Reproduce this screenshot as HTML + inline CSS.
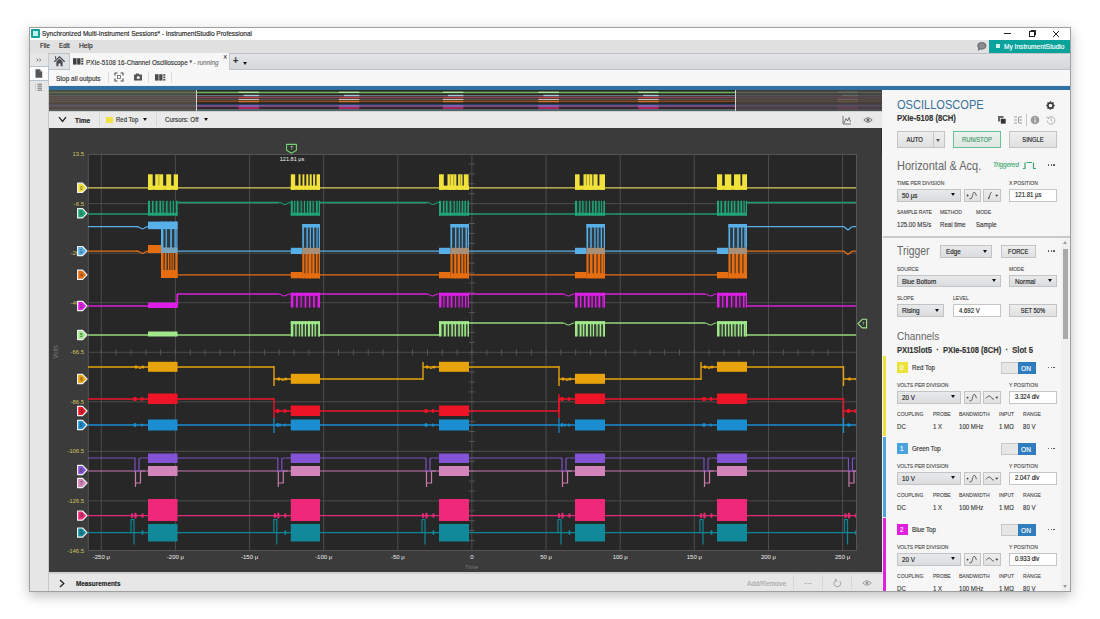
<!DOCTYPE html><html><head><meta charset="utf-8"><style>
*{box-sizing:border-box;margin:0;padding:0}
html,body{width:1100px;height:619px;overflow:hidden;background:#fff;font-family:"Liberation Sans",sans-serif;color:#333}
.a{position:absolute}
.t{position:absolute;white-space:nowrap;line-height:1;-webkit-text-stroke:.15px currentColor}
.lbl{position:absolute;white-space:nowrap;line-height:1;-webkit-text-stroke:.12px currentColor;font-size:5.8px;transform:scaleX(.87);transform-origin:0 50%;color:#4a4a4a}
.val{position:absolute;white-space:nowrap;line-height:1;-webkit-text-stroke:.12px currentColor;font-size:7.0px;transform:scaleX(.87);transform-origin:0 50%;color:#333}
.dd{position:absolute;background:linear-gradient(#e8e9ea,#dadcde);border:1px solid #c2c4c6}
.btn{position:absolute;background:linear-gradient(#eeeeef,#dfe0e1);border:1px solid #c2c4c6}
.tb{position:absolute;background:#fff;border:1px solid #c6c6c6}
.tri{position:absolute;width:0;height:0;border-left:2.5px solid transparent;border-right:2.5px solid transparent;border-top:3.5px solid #111}
</style></head><body><div class="a" style="left:29px;top:27px;width:1042px;height:565px;border:1px solid #a0a0a0;background:#f0f0f0;box-shadow:0 4px 12px rgba(0,0,0,.25)"></div>
<div class="a" style="left:30px;top:28px;width:1040px;height:12px;background:#ffffff;"></div>
<div class="a" style="left:31px;top:29px;width:9px;height:9px;background:#12a39a;border-radius:1px"></div>
<div class="a" style="left:33px;top:31px;width:5px;height:5px;background:#bff0ec"></div>
<div class="t" style="left:42px;top:30.48px;font-size:7.44px;transform:scaleX(0.8696);transform-origin:0 50%;color:#222;font-weight:normal;">Synchronized Multi-Instrument Sessions* - InstrumentStudio Professional</div>
<div class="a" style="left:1004px;top:33px;width:7px;height:1px;background:#222;"></div>
<svg class="a" style="left:1028px;top:29px" width="9" height="9" viewBox="0 0 9 9"><rect x="1.5" y="2.5" width="5" height="5" fill="none" stroke="#222" stroke-width="1"/><path d="M3 2.5V1.5H7.5V6H6.5" fill="none" stroke="#222" stroke-width="1"/></svg>
<svg class="a" style="left:1052px;top:30px" width="8" height="8" viewBox="0 0 8 8"><path d="M1 1L7 7M7 1L1 7" stroke="#222" stroke-width="1"/></svg>
<div class="a" style="left:30px;top:40px;width:1040px;height:13px;background:#e1e1e1;"></div>
<div class="t" style="left:40.1px;top:42.37px;font-size:7.06px;transform:scaleX(0.8696);transform-origin:0 50%;color:#222;font-weight:normal;">File</div>
<div class="t" style="left:59.2px;top:42.29px;font-size:7.21px;transform:scaleX(0.8696);transform-origin:0 50%;color:#222;font-weight:normal;">Edit</div>
<div class="t" style="left:79.2px;top:42.07px;font-size:7.66px;transform:scaleX(0.8696);transform-origin:0 50%;color:#222;font-weight:normal;">Help</div>
<svg class="a" style="left:976px;top:41px" width="11" height="11" viewBox="0 0 11 11"><ellipse cx="5.8" cy="4.8" rx="4.6" ry="3.9" fill="#6f7375"/><path d="M2.5 7L1.5 10L5 8Z" fill="#6f7375"/><ellipse cx="5.8" cy="4.8" rx="3.2" ry="2.6" fill="#8a8e90"/></svg>
<div class="a" style="left:989px;top:40px;width:81px;height:13px;background:#0aa39c;"></div>
<div class="a" style="left:996px;top:44px;width:4px;height:4px;background:#cfeeee;"></div>
<div class="t" style="left:1004px;top:43.01px;font-size:7.59px;transform:scaleX(0.8696);transform-origin:0 50%;color:#ffffff;font-weight:normal;">My InstrumentStudio</div>
<div class="a" style="left:30px;top:53px;width:18px;height:538px;background:#e6e6e6;"></div>
<div class="a" style="left:48px;top:53px;width:1px;height:538px;background:#c8c8c8;"></div>
<svg class="a" style="left:36px;top:58px" width="6" height="4" viewBox="0 0 6 4"><path d="M0.8 0.6L2.2 2L0.8 3.4M3.4 0.6L4.8 2L3.4 3.4" fill="none" stroke="#666" stroke-width=".9"/></svg>
<div class="a" style="left:30px;top:66px;width:19px;height:14.5px;background:#ffffff;border:1px solid #b4c4d2;border-left:0"></div>
<svg class="a" style="left:35px;top:69px" width="8" height="9" viewBox="0 0 8 9"><path d="M0.5 0.3H4.8L7.2 2.7V8.7H0.5Z" fill="#55585b"/><path d="M4.8 0.3V2.7H7.2" fill="#9a9da0"/></svg>
<svg class="a" style="left:34px;top:83px" width="9" height="8" viewBox="0 0 9 8"><path d="M3.5 1.2H8M3.5 3.2H8M3.5 5.2H8M3.5 7.2H8" stroke="#666" stroke-width=".9"/><path d="M1.5 0.5V7.8" stroke="#bbb" stroke-width=".6"/></svg>
<div class="a" style="left:49px;top:53px;width:1021px;height:17px;background:linear-gradient(#e2e4e7,#d5d8db);border-top:1px solid #bfc2c5;border-bottom:1px solid #c0c3c6"></div>
<div class="a" style="left:49px;top:54px;width:21px;height:15px;background:#dfe2e5;border-right:1px solid #c5c8cb"></div>
<svg class="a" style="left:53px;top:55px" width="13" height="13" viewBox="0 0 13 13"><path d="M1.3 6.8L6.5 1.8L11.7 6.8" fill="none" stroke="#45494d" stroke-width="1.2"/><path d="M2.6 1.2V4.2" stroke="#45494d" stroke-width="1"/><path d="M3.4 6.6L6.5 3.7L9.6 6.6V11.2H7.6V8.6H5.4V11.2H3.4Z" fill="#45494d"/></svg>
<div class="a" style="left:70px;top:53px;width:160px;height:17px;background:#f7f7f7;border-right:1px solid #c8cacc"></div>
<svg class="a" style="left:72.5px;top:58px" width="11" height="7" viewBox="0 0 11 7"><rect x="0" y="0.2" width="3.6" height="6.4" fill="#3d3f41"/><rect x="4.2" y="0.2" width="3.3" height="6.4" fill="#3d3f41"/><rect x="8.3" y="0.2" width="2" height="1.6" fill="#3d3f41"/><rect x="8.3" y="2.6" width="2" height="1.6" fill="#3d3f41"/><rect x="8.3" y="5" width="2" height="1.6" fill="#3d3f41"/></svg>
<div class="t" style="left:86px;top:59.07px;font-size:7.26px;transform:scaleX(0.8696);transform-origin:0 50%;color:#333;font-weight:normal;">PXIe-5108 16-Channel Oscilloscope * <span style="color:#777;font-style:italic">- running</span></div>
<div class="t" style="left:222.5px;top:55.33px;font-size:5.75px;transform:scaleX(0.8696);transform-origin:0 50%;color:#333;font-weight:normal;">&#x2715;</div>
<div class="t" style="left:233px;top:56.03px;font-size:10.35px;transform:scaleX(0.8696);transform-origin:0 50%;color:#333;font-weight:bold;">+</div>
<div class="tri" style="left:243px;top:62px;border-left-width:2px;border-right-width:2px;border-top-width:3px"></div>
<div class="a" style="left:49px;top:70px;width:1021px;height:15px;background:#f7f7f7;"></div>
<div class="t" style="left:55.8px;top:74.97px;font-size:7.45px;transform:scaleX(0.8696);transform-origin:0 50%;color:#333;font-weight:normal;">Stop all outputs</div>
<div class="a" style="left:108px;top:72px;width:1px;height:11px;background:#dcdcdc;"></div>
<svg class="a" style="left:114px;top:72px" width="10" height="10" viewBox="0 0 10 10"><path d="M1 3.5V1H3.5M6.5 1H9V3.5M9 6.5V9H6.5M3.5 9H1V6.5" fill="none" stroke="#555" stroke-width="1.2"/><rect x="3.5" y="3.5" width="3" height="3" fill="none" stroke="#666" stroke-width=".8"/></svg>
<svg class="a" style="left:133px;top:73px" width="10" height="8" viewBox="0 0 10 8"><rect x="1" y="1.5" width="8" height="6" fill="#555"/><rect x="3" y="0.5" width="3" height="1.5" fill="#555"/><circle cx="5.3" cy="4.5" r="1.6" fill="#eee"/></svg>
<div class="a" style="left:148px;top:72px;width:1px;height:11px;background:#dcdcdc;"></div>
<svg class="a" style="left:155px;top:74px" width="11" height="7" viewBox="0 0 11 7"><rect x="0" y="0.2" width="3.6" height="6.4" fill="#4a4c4e"/><rect x="4.2" y="0.2" width="3.3" height="6.4" fill="#4a4c4e"/><rect x="8.3" y="0.2" width="2" height="1.6" fill="#4a4c4e"/><rect x="8.3" y="2.6" width="2" height="1.6" fill="#4a4c4e"/><rect x="8.3" y="5" width="2" height="1.6" fill="#4a4c4e"/></svg>
<div class="a" style="left:171px;top:72px;width:1px;height:11px;background:#dcdcdc;"></div>
<div class="a" style="left:49px;top:85.5px;width:1021px;height:4.5px;background:#3170a2;"></div>
<svg class="a" style="left:49px;top:90px" width="834" height="21" viewBox="49 90 834 21"><rect x="49" y="90" width="834" height="21" fill="#262626"/><rect x="49" y="91.7" width="834" height="1.6" fill="#70b458"/><rect x="49" y="95.15" width="834" height="1.1" fill="#6e8494"/><rect x="49" y="96.75" width="834" height="1.5" fill="#8e4650"/><rect x="49" y="98.75" width="834" height="1.1" fill="#5c5c5c"/><rect x="49" y="100.5" width="834" height="1.6" fill="#8a4a20"/><rect x="49" y="104.0" width="834" height="1.0" fill="#28406a"/><rect x="49" y="105.25" width="834" height="1.5" fill="#8a5a98"/><rect x="49" y="107.4" width="834" height="1.2" fill="#4a2030"/><rect x="49" y="109.25" width="834" height="1.5" fill="#5c7c84"/><g opacity=".75"><rect x="238.6" y="91.6" width="20.5" height="1.4" fill="#c8f0b0"/><rect x="243.6" y="94.8" width="15.5" height="1.4" fill="#c0e8f8"/><rect x="238.6" y="97" width="20.5" height="1.2" fill="#e04850"/><rect x="238.6" y="99" width="20.5" height="1" fill="#e8e8e0"/><rect x="238.6" y="100.8" width="20.5" height="1.5" fill="#e08030"/><rect x="238.6" y="105.2" width="20.5" height="1.5" fill="#9070d0"/><rect x="238.6" y="107.2" width="20.5" height="1.6" fill="#f02a80"/></g><g opacity=".75"><rect x="338.9" y="91.6" width="20.5" height="1.4" fill="#c8f0b0"/><rect x="343.9" y="94.8" width="15.5" height="1.4" fill="#c0e8f8"/><rect x="338.9" y="97" width="20.5" height="1.2" fill="#e04850"/><rect x="338.9" y="99" width="20.5" height="1" fill="#e8e8e0"/><rect x="338.9" y="100.8" width="20.5" height="1.5" fill="#e08030"/><rect x="338.9" y="105.2" width="20.5" height="1.5" fill="#9070d0"/><rect x="338.9" y="107.2" width="20.5" height="1.6" fill="#f02a80"/></g><g opacity=".75"><rect x="442.9" y="91.6" width="20.5" height="1.4" fill="#c8f0b0"/><rect x="447.9" y="94.8" width="15.5" height="1.4" fill="#c0e8f8"/><rect x="442.9" y="97" width="20.5" height="1.2" fill="#e04850"/><rect x="442.9" y="99" width="20.5" height="1" fill="#e8e8e0"/><rect x="442.9" y="100.8" width="20.5" height="1.5" fill="#e08030"/><rect x="442.9" y="105.2" width="20.5" height="1.5" fill="#9070d0"/><rect x="442.9" y="107.2" width="20.5" height="1.6" fill="#f02a80"/></g><g opacity=".75"><rect x="538.4" y="91.6" width="20.5" height="1.4" fill="#c8f0b0"/><rect x="543.4" y="94.8" width="15.5" height="1.4" fill="#c0e8f8"/><rect x="538.4" y="97" width="20.5" height="1.2" fill="#e04850"/><rect x="538.4" y="99" width="20.5" height="1" fill="#e8e8e0"/><rect x="538.4" y="100.8" width="20.5" height="1.5" fill="#e08030"/><rect x="538.4" y="105.2" width="20.5" height="1.5" fill="#9070d0"/><rect x="538.4" y="107.2" width="20.5" height="1.6" fill="#f02a80"/></g><g opacity=".75"><rect x="638.1" y="91.6" width="20.5" height="1.4" fill="#c8f0b0"/><rect x="643.1" y="94.8" width="15.5" height="1.4" fill="#c0e8f8"/><rect x="638.1" y="97" width="20.5" height="1.2" fill="#e04850"/><rect x="638.1" y="99" width="20.5" height="1" fill="#e8e8e0"/><rect x="638.1" y="100.8" width="20.5" height="1.5" fill="#e08030"/><rect x="638.1" y="105.2" width="20.5" height="1.5" fill="#9070d0"/><rect x="638.1" y="107.2" width="20.5" height="1.6" fill="#f02a80"/></g><g opacity=".75"><rect x="837.5" y="91.6" width="20.5" height="1.4" fill="#c8f0b0"/><rect x="842.5" y="94.8" width="15.5" height="1.4" fill="#c0e8f8"/><rect x="837.5" y="97" width="20.5" height="1.2" fill="#e04850"/><rect x="837.5" y="99" width="20.5" height="1" fill="#e8e8e0"/><rect x="837.5" y="100.8" width="20.5" height="1.5" fill="#e08030"/><rect x="837.5" y="105.2" width="20.5" height="1.5" fill="#9070d0"/><rect x="837.5" y="107.2" width="20.5" height="1.6" fill="#f02a80"/></g><rect x="49" y="90" width="147.5" height="21" fill="#5a5850" opacity=".72"/><rect x="735" y="90" width="148" height="21" fill="#4c4848" opacity=".75"/><path d="M196.5 90V111M735.5 90V111" stroke="#d0d0d0" stroke-width="1"/></svg>
<div class="a" style="left:49px;top:111px;width:834px;height:17px;background:#e9e9e9;border-top:1px solid #d0d0d0"></div>
<svg class="a" style="left:58px;top:116px" width="9" height="7" viewBox="0 0 9 7"><path d="M1 1.2 L4.5 5.5 L8 1.2" fill="none" stroke="#222" stroke-width="1.3"/></svg>
<div class="t" style="left:75.3px;top:116.93px;font-size:7.54px;transform:scaleX(0.8696);transform-origin:0 50%;color:#222;font-weight:bold;">Time</div>
<div class="a" style="left:99px;top:113px;width:1px;height:13px;background:#d4d4d4;"></div>
<div class="a" style="left:106px;top:116.5px;width:6.5px;height:6.5px;background:#f0e442;"></div>
<div class="t" style="left:115.7px;top:117.24px;font-size:6.92px;transform:scaleX(0.8696);transform-origin:0 50%;color:#333;font-weight:normal;">Red Top</div>
<div class="tri" style="left:142.5px;top:118px"></div>
<div class="a" style="left:156px;top:113px;width:1px;height:13px;background:#d4d4d4;"></div>
<div class="t" style="left:164.5px;top:117.11px;font-size:7.18px;transform:scaleX(0.8696);transform-origin:0 50%;color:#333;font-weight:normal;">Cursors: Off</div>
<div class="tri" style="left:203.5px;top:118px"></div>
<svg class="a" style="left:842px;top:114.5px" width="10" height="10" viewBox="0 0 10 10"><path d="M1 1V9H9" fill="none" stroke="#666" stroke-width=".9"/><path d="M2 8L4 3.5L5.5 6L7 2.5L8.5 7" fill="none" stroke="#666" stroke-width=".9"/></svg>
<svg class="a" style="left:863px;top:116px" width="10" height="8" viewBox="0 0 10 8"><path d="M0.8 4Q5 -0.5 9.2 4Q5 8.5 0.8 4Z" fill="none" stroke="#666" stroke-width=".9"/><circle cx="5" cy="4" r="1.5" fill="#666"/></svg>
<div class="a" style="left:49px;top:128px;width:833px;height:444px;background:#3b3b3b;"></div>
<div class="a" style="left:880.5px;top:128px;width:1.5px;height:444px;background:#303030;"></div>
<svg class="a" style="left:49px;top:128px" width="834" height="444" viewBox="49 128 834 444" font-family="Liberation Sans, sans-serif"><rect x="88" y="154" width="769" height="397" fill="#272727"/><path d="M101.3 154V551M175.4 154V551M249.6 154V551M323.7 154V551M397.8 154V551M471.9 154V551M546.1 154V551M620.2 154V551M694.3 154V551M768.5 154V551M842.6 154V551M88 203.6H857M88 253.2H857M88 302.7H857M88 352.3H857M88 401.8H857M88 451.3H857M88 500.9H857" stroke="#4c4c4c" stroke-width="1" fill="none"/><path d="M88.3 550.5V154.5H856.5V550.5H88" fill="none" stroke="#555" stroke-width="1"/><path d="M101.3 349.3V355.3M116.1 349.3V355.3M131.0 349.3V355.3M145.8 349.3V355.3M160.6 349.3V355.3M175.4 349.3V355.3M190.3 349.3V355.3M205.1 349.3V355.3M219.9 349.3V355.3M234.7 349.3V355.3M249.6 349.3V355.3M264.4 349.3V355.3M279.2 349.3V355.3M294.0 349.3V355.3M308.9 349.3V355.3M323.7 349.3V355.3M338.5 349.3V355.3M353.3 349.3V355.3M368.2 349.3V355.3M383.0 349.3V355.3M397.8 349.3V355.3M412.6 349.3V355.3M427.5 349.3V355.3M442.3 349.3V355.3M457.1 349.3V355.3M471.9 349.3V355.3M486.8 349.3V355.3M501.6 349.3V355.3M516.4 349.3V355.3M531.3 349.3V355.3M546.1 349.3V355.3M560.9 349.3V355.3M575.7 349.3V355.3M590.6 349.3V355.3M605.4 349.3V355.3M620.2 349.3V355.3M635.0 349.3V355.3M649.9 349.3V355.3M664.7 349.3V355.3M679.5 349.3V355.3M694.3 349.3V355.3M709.2 349.3V355.3M724.0 349.3V355.3M738.8 349.3V355.3M753.6 349.3V355.3M768.5 349.3V355.3M783.3 349.3V355.3M798.1 349.3V355.3M812.9 349.3V355.3M827.8 349.3V355.3M842.6 349.3V355.3M468.9 164.0H474.9M468.9 173.9H474.9M468.9 183.8H474.9M468.9 193.7H474.9M468.9 203.6H474.9M468.9 213.5H474.9M468.9 223.5H474.9M468.9 233.4H474.9M468.9 243.3H474.9M468.9 253.2H474.9M468.9 263.1H474.9M468.9 273.0H474.9M468.9 282.9H474.9M468.9 292.8H474.9M468.9 302.7H474.9M468.9 312.6H474.9M468.9 322.5H474.9M468.9 332.4H474.9M468.9 342.4H474.9M468.9 352.3H474.9M468.9 362.2H474.9M468.9 372.1H474.9M468.9 382.0H474.9M468.9 391.9H474.9M468.9 401.8H474.9M468.9 411.7H474.9M468.9 421.6H474.9M468.9 431.5H474.9M468.9 441.4H474.9M468.9 451.3H474.9M468.9 461.2H474.9M468.9 471.2H474.9M468.9 481.1H474.9M468.9 491.0H474.9M468.9 500.9H474.9M468.9 510.8H474.9M468.9 520.7H474.9M468.9 530.6H474.9M468.9 540.5H474.9" stroke="#555" stroke-width="1" fill="none"/><path d="M88 187.8H857" stroke="#d8cf58" stroke-width="1.3" fill="none"/><rect x="148.00" y="185.60" width="29.50" height="4.20" fill="#f0e23a"/><rect x="148.00" y="174.30" width="4.70" height="15.50" fill="#f0e23a"/><rect x="155.20" y="174.30" width="8.00" height="15.50" fill="#f0e23a"/><rect x="166.20" y="174.30" width="5.00" height="15.50" fill="#f0e23a"/><rect x="173.70" y="174.30" width="4.30" height="15.50" fill="#f0e23a"/><rect x="158.50" y="174.80" width="0.80" height="10.50" fill="#968e31"/><rect x="290.80" y="185.60" width="29.20" height="4.20" fill="#f0e23a"/><rect x="290.80" y="174.30" width="4.40" height="15.50" fill="#f0e23a"/><rect x="298.60" y="174.30" width="1.90" height="15.50" fill="#f0e23a"/><rect x="302.50" y="174.30" width="1.90" height="15.50" fill="#f0e23a"/><rect x="306.30" y="174.30" width="2.00" height="15.50" fill="#f0e23a"/><rect x="309.70" y="174.30" width="2.00" height="15.50" fill="#f0e23a"/><rect x="313.10" y="174.30" width="2.00" height="15.50" fill="#f0e23a"/><rect x="316.50" y="174.30" width="3.50" height="15.50" fill="#f0e23a"/><rect x="439.00" y="185.60" width="30.00" height="4.20" fill="#f0e23a"/><rect x="439.00" y="174.30" width="4.80" height="15.50" fill="#f0e23a"/><rect x="447.50" y="174.30" width="8.90" height="15.50" fill="#f0e23a"/><rect x="458.10" y="174.30" width="4.40" height="15.50" fill="#f0e23a"/><rect x="463.80" y="174.30" width="4.80" height="15.50" fill="#f0e23a"/><rect x="449.90" y="174.80" width="0.80" height="10.50" fill="#968e31"/><rect x="453.40" y="174.80" width="0.80" height="10.50" fill="#968e31"/><rect x="459.90" y="174.80" width="0.80" height="10.50" fill="#968e31"/><rect x="575.00" y="185.60" width="30.00" height="4.20" fill="#f0e23a"/><rect x="575.00" y="174.30" width="4.60" height="15.50" fill="#f0e23a"/><rect x="583.50" y="174.30" width="8.90" height="15.50" fill="#f0e23a"/><rect x="593.40" y="174.30" width="4.20" height="15.50" fill="#f0e23a"/><rect x="599.40" y="174.30" width="5.60" height="15.50" fill="#f0e23a"/><rect x="585.90" y="174.80" width="0.80" height="10.50" fill="#968e31"/><rect x="589.00" y="174.80" width="0.80" height="10.50" fill="#968e31"/><rect x="717.00" y="185.60" width="30.00" height="4.20" fill="#f0e23a"/><rect x="717.00" y="174.30" width="5.20" height="15.50" fill="#f0e23a"/><rect x="724.80" y="174.30" width="6.50" height="15.50" fill="#f0e23a"/><rect x="734.00" y="174.30" width="6.50" height="15.50" fill="#f0e23a"/><rect x="742.20" y="174.30" width="4.80" height="15.50" fill="#f0e23a"/><path d="M88 214H148M148 202.5H290.8M290.8 202.5H439M439 214H575M575 214H717M717 202.5H857" stroke="#1f9a70" stroke-width="1.3" fill="none"/><rect x="148.00" y="200.80" width="29.50" height="14.80" fill="#263a33"/><rect x="148.00" y="212.80" width="29.50" height="2.80" fill="#20a678"/><rect x="148.00" y="200.80" width="2.00" height="14.80" fill="#20a678"/><rect x="151.99" y="200.80" width="1.52" height="14.80" fill="#20a678"/><rect x="155.68" y="200.80" width="1.66" height="14.80" fill="#20a678"/><rect x="159.45" y="200.80" width="1.65" height="14.80" fill="#20a678"/><rect x="162.43" y="200.80" width="1.33" height="14.80" fill="#20a678"/><rect x="166.09" y="200.80" width="1.45" height="14.80" fill="#20a678"/><rect x="169.84" y="200.80" width="1.08" height="14.80" fill="#20a678"/><rect x="172.73" y="200.80" width="1.17" height="14.80" fill="#20a678"/><rect x="175.81" y="200.80" width="1.40" height="14.80" fill="#20a678"/><rect x="176.30" y="200.80" width="1.20" height="14.80" fill="#20a678"/><rect x="278.80" y="201.50" width="12.00" height="3.00" fill="#272727"/><path d="M278.8 202.5C282.3 202.5 282.3 204.5 284.8 204.5S287.3 202.5 290.8 202.5" stroke="#1f9a70" stroke-width="1.2" fill="none"/><rect x="290.80" y="200.80" width="29.20" height="14.80" fill="#263a33"/><rect x="290.80" y="212.80" width="29.20" height="2.80" fill="#20a678"/><rect x="290.80" y="200.80" width="2.00" height="14.80" fill="#20a678"/><rect x="294.11" y="200.80" width="1.15" height="14.80" fill="#20a678"/><rect x="296.87" y="200.80" width="1.64" height="14.80" fill="#20a678"/><rect x="300.66" y="200.80" width="1.11" height="14.80" fill="#20a678"/><rect x="303.95" y="200.80" width="1.10" height="14.80" fill="#20a678"/><rect x="307.02" y="200.80" width="1.09" height="14.80" fill="#20a678"/><rect x="309.41" y="200.80" width="1.61" height="14.80" fill="#20a678"/><rect x="312.55" y="200.80" width="1.15" height="14.80" fill="#20a678"/><rect x="316.08" y="200.80" width="1.61" height="14.80" fill="#20a678"/><rect x="319.31" y="200.80" width="0.69" height="14.80" fill="#20a678"/><rect x="318.80" y="200.80" width="1.20" height="14.80" fill="#20a678"/><rect x="427.00" y="201.50" width="12.00" height="3.00" fill="#272727"/><path d="M427.0 202.5C430.5 202.5 430.5 204.5 433.0 204.5S435.5 202.5 439.0 202.5" stroke="#1f9a70" stroke-width="1.2" fill="none"/><rect x="439.00" y="200.80" width="30.00" height="14.80" fill="#263a33"/><rect x="439.00" y="212.80" width="30.00" height="2.80" fill="#20a678"/><rect x="439.00" y="200.80" width="2.00" height="14.80" fill="#20a678"/><rect x="442.89" y="200.80" width="1.47" height="14.80" fill="#20a678"/><rect x="445.89" y="200.80" width="1.66" height="14.80" fill="#20a678"/><rect x="449.61" y="200.80" width="1.68" height="14.80" fill="#20a678"/><rect x="453.57" y="200.80" width="1.21" height="14.80" fill="#20a678"/><rect x="456.48" y="200.80" width="1.12" height="14.80" fill="#20a678"/><rect x="459.05" y="200.80" width="1.05" height="14.80" fill="#20a678"/><rect x="461.73" y="200.80" width="1.42" height="14.80" fill="#20a678"/><rect x="464.46" y="200.80" width="1.47" height="14.80" fill="#20a678"/><rect x="467.60" y="200.80" width="1.22" height="14.80" fill="#20a678"/><rect x="467.80" y="200.80" width="1.20" height="14.80" fill="#20a678"/><rect x="575.00" y="200.80" width="30.00" height="14.80" fill="#263a33"/><rect x="575.00" y="212.80" width="30.00" height="2.80" fill="#20a678"/><rect x="575.00" y="200.80" width="2.00" height="14.80" fill="#20a678"/><rect x="579.20" y="200.80" width="1.34" height="14.80" fill="#20a678"/><rect x="582.18" y="200.80" width="1.34" height="14.80" fill="#20a678"/><rect x="585.60" y="200.80" width="1.04" height="14.80" fill="#20a678"/><rect x="589.01" y="200.80" width="1.02" height="14.80" fill="#20a678"/><rect x="592.15" y="200.80" width="1.59" height="14.80" fill="#20a678"/><rect x="595.06" y="200.80" width="1.55" height="14.80" fill="#20a678"/><rect x="598.32" y="200.80" width="1.40" height="14.80" fill="#20a678"/><rect x="601.03" y="200.80" width="1.03" height="14.80" fill="#20a678"/><rect x="603.56" y="200.80" width="1.44" height="14.80" fill="#20a678"/><rect x="603.80" y="200.80" width="1.20" height="14.80" fill="#20a678"/><rect x="717.00" y="200.80" width="30.00" height="14.80" fill="#263a33"/><rect x="717.00" y="212.80" width="30.00" height="2.80" fill="#20a678"/><rect x="717.00" y="200.80" width="2.00" height="14.80" fill="#20a678"/><rect x="720.52" y="200.80" width="1.53" height="14.80" fill="#20a678"/><rect x="724.37" y="200.80" width="1.66" height="14.80" fill="#20a678"/><rect x="727.71" y="200.80" width="1.25" height="14.80" fill="#20a678"/><rect x="730.83" y="200.80" width="1.54" height="14.80" fill="#20a678"/><rect x="733.79" y="200.80" width="1.52" height="14.80" fill="#20a678"/><rect x="737.49" y="200.80" width="1.60" height="14.80" fill="#20a678"/><rect x="740.44" y="200.80" width="1.66" height="14.80" fill="#20a678"/><rect x="743.50" y="200.80" width="1.24" height="14.80" fill="#20a678"/><rect x="746.71" y="200.80" width="0.29" height="14.80" fill="#20a678"/><rect x="745.80" y="200.80" width="1.20" height="14.80" fill="#20a678"/><path d="M88 226.6H138M177.5 251.1H717M747 226.6H843" stroke="#58b0e8" stroke-width="1.3" fill="none"/><path d="M136.5 226.6C140.0 226.6 140.0 228.79999999999998 142.5 228.79999999999998S145.0 226.6 148.5 226.6" stroke="#58b0e8" stroke-width="1.2" fill="none"/><path d="M843.0 226.6C846.0 226.6 846.0 229.79999999999998 848.0 229.79999999999998S850.0 226.6 853.0 226.6M852.5 226.6H857" stroke="#58b0e8" stroke-width="1.4" fill="none"/><path d="M88 251.1H138M177.5 274.8H717M747 251.1H843" stroke="#e66e10" stroke-width="1.3" fill="none"/><path d="M136.5 251.1C140.0 251.1 140.0 253.29999999999998 142.5 253.29999999999998S145.0 251.1 148.5 251.1" stroke="#e66e10" stroke-width="1.2" fill="none"/><path d="M843.0 251.1C846.0 251.1 846.0 254.29999999999998 848.0 254.29999999999998S850.0 251.1 853.0 251.1M852.5 251.1H857" stroke="#e66e10" stroke-width="1.4" fill="none"/><rect x="148.00" y="221.60" width="13.00" height="7.60" fill="#58b0e8"/><rect x="148.00" y="245.00" width="13.00" height="8.00" fill="#e66e10"/><rect x="161.00" y="253.00" width="16.50" height="25.00" fill="#493423"/><rect x="161.00" y="270.00" width="16.50" height="8.00" fill="#e66e10"/><rect x="161.00" y="253.00" width="2.50" height="25.00" fill="#e66e10"/><rect x="164.77" y="253.00" width="1.74" height="25.00" fill="#e66e10"/><rect x="167.95" y="253.00" width="1.25" height="25.00" fill="#e66e10"/><rect x="170.45" y="253.00" width="1.14" height="25.00" fill="#e66e10"/><rect x="172.66" y="253.00" width="1.12" height="25.00" fill="#e66e10"/><rect x="175.33" y="253.00" width="1.80" height="25.00" fill="#e66e10"/><rect x="176.30" y="253.00" width="1.20" height="25.00" fill="#e66e10"/><rect x="161.00" y="221.60" width="16.50" height="31.40" fill="#2e3a42"/><rect x="161.00" y="221.60" width="16.50" height="7.50" fill="#58b0e8"/><rect x="161.00" y="221.60" width="2.40" height="31.40" fill="#58b0e8"/><rect x="165.63" y="221.60" width="1.24" height="31.40" fill="#58b0e8"/><rect x="170.25" y="221.60" width="1.63" height="31.40" fill="#58b0e8"/><rect x="174.44" y="221.60" width="1.39" height="31.40" fill="#58b0e8"/><rect x="176.30" y="221.60" width="1.20" height="31.40" fill="#58b0e8"/><rect x="161.00" y="247.50" width="16.50" height="5.50" fill="#77a5be"/><rect x="290.80" y="247.80" width="11.50" height="6.20" fill="#58b0e8"/><rect x="290.80" y="272.00" width="11.50" height="6.30" fill="#e66e10"/><rect x="302.30" y="254.00" width="17.70" height="24.30" fill="#513722"/><rect x="302.30" y="273.30" width="17.70" height="5.00" fill="#e66e10"/><rect x="302.30" y="254.00" width="2.00" height="24.30" fill="#e66e10"/><rect x="305.56" y="254.00" width="2.02" height="24.30" fill="#e66e10"/><rect x="308.53" y="254.00" width="2.86" height="24.30" fill="#e66e10"/><rect x="312.31" y="254.00" width="2.14" height="24.30" fill="#e66e10"/><rect x="316.02" y="254.00" width="1.52" height="24.30" fill="#e66e10"/><rect x="319.03" y="254.00" width="0.97" height="24.30" fill="#e66e10"/><rect x="318.80" y="254.00" width="1.20" height="24.30" fill="#e66e10"/><rect x="302.30" y="224.00" width="17.70" height="23.80" fill="#2e3a42"/><rect x="302.30" y="224.00" width="17.70" height="3.50" fill="#58b0e8"/><rect x="302.30" y="224.00" width="1.60" height="23.80" fill="#58b0e8"/><rect x="306.46" y="224.00" width="1.37" height="23.80" fill="#58b0e8"/><rect x="309.76" y="224.00" width="1.16" height="23.80" fill="#58b0e8"/><rect x="312.90" y="224.00" width="1.41" height="23.80" fill="#58b0e8"/><rect x="316.46" y="224.00" width="1.17" height="23.80" fill="#58b0e8"/><rect x="318.80" y="224.00" width="1.20" height="23.80" fill="#58b0e8"/><rect x="302.30" y="247.80" width="17.70" height="6.20" fill="#a89078"/><rect x="439.00" y="247.80" width="11.50" height="6.20" fill="#58b0e8"/><rect x="439.00" y="272.00" width="11.50" height="6.30" fill="#e66e10"/><rect x="450.50" y="254.00" width="18.50" height="24.30" fill="#513722"/><rect x="450.50" y="273.30" width="18.50" height="5.00" fill="#e66e10"/><rect x="450.50" y="254.00" width="2.00" height="24.30" fill="#e66e10"/><rect x="454.18" y="254.00" width="2.07" height="24.30" fill="#e66e10"/><rect x="457.54" y="254.00" width="2.54" height="24.30" fill="#e66e10"/><rect x="461.37" y="254.00" width="1.79" height="24.30" fill="#e66e10"/><rect x="464.38" y="254.00" width="1.55" height="24.30" fill="#e66e10"/><rect x="467.13" y="254.00" width="1.87" height="24.30" fill="#e66e10"/><rect x="467.80" y="254.00" width="1.20" height="24.30" fill="#e66e10"/><rect x="450.50" y="224.00" width="18.50" height="23.80" fill="#2e3a42"/><rect x="450.50" y="224.00" width="18.50" height="3.50" fill="#58b0e8"/><rect x="450.50" y="224.00" width="1.60" height="23.80" fill="#58b0e8"/><rect x="455.05" y="224.00" width="1.28" height="23.80" fill="#58b0e8"/><rect x="458.73" y="224.00" width="1.10" height="23.80" fill="#58b0e8"/><rect x="461.74" y="224.00" width="1.06" height="23.80" fill="#58b0e8"/><rect x="465.54" y="224.00" width="1.42" height="23.80" fill="#58b0e8"/><rect x="467.80" y="224.00" width="1.20" height="23.80" fill="#58b0e8"/><rect x="450.50" y="247.80" width="18.50" height="6.20" fill="#a89078"/><rect x="575.00" y="247.80" width="11.50" height="6.20" fill="#58b0e8"/><rect x="575.00" y="272.00" width="11.50" height="6.30" fill="#e66e10"/><rect x="586.50" y="254.00" width="18.50" height="24.30" fill="#513722"/><rect x="586.50" y="273.30" width="18.50" height="5.00" fill="#e66e10"/><rect x="586.50" y="254.00" width="2.00" height="24.30" fill="#e66e10"/><rect x="590.02" y="254.00" width="2.48" height="24.30" fill="#e66e10"/><rect x="593.93" y="254.00" width="2.59" height="24.30" fill="#e66e10"/><rect x="597.71" y="254.00" width="2.50" height="24.30" fill="#e66e10"/><rect x="601.34" y="254.00" width="2.13" height="24.30" fill="#e66e10"/><rect x="604.98" y="254.00" width="0.02" height="24.30" fill="#e66e10"/><rect x="603.80" y="254.00" width="1.20" height="24.30" fill="#e66e10"/><rect x="586.50" y="224.00" width="18.50" height="23.80" fill="#2e3a42"/><rect x="586.50" y="224.00" width="18.50" height="3.50" fill="#58b0e8"/><rect x="586.50" y="224.00" width="1.60" height="23.80" fill="#58b0e8"/><rect x="590.25" y="224.00" width="1.47" height="23.80" fill="#58b0e8"/><rect x="594.30" y="224.00" width="1.25" height="23.80" fill="#58b0e8"/><rect x="597.36" y="224.00" width="1.23" height="23.80" fill="#58b0e8"/><rect x="600.69" y="224.00" width="1.30" height="23.80" fill="#58b0e8"/><rect x="604.35" y="224.00" width="0.65" height="23.80" fill="#58b0e8"/><rect x="603.80" y="224.00" width="1.20" height="23.80" fill="#58b0e8"/><rect x="586.50" y="247.80" width="18.50" height="6.20" fill="#a89078"/><rect x="717.00" y="247.80" width="11.50" height="6.20" fill="#58b0e8"/><rect x="717.00" y="272.00" width="11.50" height="6.30" fill="#e66e10"/><rect x="728.50" y="254.00" width="18.50" height="24.30" fill="#513722"/><rect x="728.50" y="273.30" width="18.50" height="5.00" fill="#e66e10"/><rect x="728.50" y="254.00" width="2.00" height="24.30" fill="#e66e10"/><rect x="731.92" y="254.00" width="2.66" height="24.30" fill="#e66e10"/><rect x="735.75" y="254.00" width="2.39" height="24.30" fill="#e66e10"/><rect x="739.64" y="254.00" width="2.71" height="24.30" fill="#e66e10"/><rect x="743.53" y="254.00" width="2.73" height="24.30" fill="#e66e10"/><rect x="745.80" y="254.00" width="1.20" height="24.30" fill="#e66e10"/><rect x="728.50" y="224.00" width="18.50" height="23.80" fill="#2e3a42"/><rect x="728.50" y="224.00" width="18.50" height="3.50" fill="#58b0e8"/><rect x="728.50" y="224.00" width="1.60" height="23.80" fill="#58b0e8"/><rect x="732.94" y="224.00" width="1.31" height="23.80" fill="#58b0e8"/><rect x="737.23" y="224.00" width="1.47" height="23.80" fill="#58b0e8"/><rect x="741.12" y="224.00" width="1.22" height="23.80" fill="#58b0e8"/><rect x="744.34" y="224.00" width="1.40" height="23.80" fill="#58b0e8"/><rect x="745.80" y="224.00" width="1.20" height="23.80" fill="#58b0e8"/><rect x="728.50" y="247.80" width="18.50" height="6.20" fill="#a89078"/><path d="M88 306H177.5V294H717M747 306H857" stroke="#d820dc" stroke-width="1.3" fill="none"/><rect x="148.00" y="302.50" width="29.50" height="5.50" fill="#de1ee6"/><rect x="176.50" y="294.00" width="1.50" height="12.00" fill="#de1ee6"/><rect x="278.80" y="293.00" width="12.00" height="3.00" fill="#272727"/><path d="M278.3 294C281.8 294 281.8 296.0 284.3 296.0S286.8 294 290.3 294" stroke="#d820dc" stroke-width="1.2" fill="none"/><rect x="290.80" y="292.80" width="29.20" height="14.70" fill="#3d263e"/><rect x="290.80" y="292.80" width="29.20" height="3.00" fill="#de1ee6"/><rect x="290.80" y="292.80" width="2.50" height="14.70" fill="#de1ee6"/><rect x="296.07" y="292.80" width="1.72" height="14.70" fill="#de1ee6"/><rect x="300.61" y="292.80" width="1.17" height="14.70" fill="#de1ee6"/><rect x="304.67" y="292.80" width="1.58" height="14.70" fill="#de1ee6"/><rect x="308.99" y="292.80" width="1.42" height="14.70" fill="#de1ee6"/><rect x="313.08" y="292.80" width="1.77" height="14.70" fill="#de1ee6"/><rect x="317.55" y="292.80" width="1.72" height="14.70" fill="#de1ee6"/><rect x="318.80" y="292.80" width="1.20" height="14.70" fill="#de1ee6"/><rect x="427.00" y="293.00" width="12.00" height="3.00" fill="#272727"/><path d="M426.5 294C430.0 294 430.0 296.0 432.5 296.0S435.0 294 438.5 294" stroke="#d820dc" stroke-width="1.2" fill="none"/><rect x="439.00" y="292.80" width="30.00" height="14.70" fill="#3d263e"/><rect x="439.00" y="292.80" width="30.00" height="3.00" fill="#de1ee6"/><rect x="439.00" y="292.80" width="2.50" height="14.70" fill="#de1ee6"/><rect x="443.34" y="292.80" width="1.16" height="14.70" fill="#de1ee6"/><rect x="446.92" y="292.80" width="1.65" height="14.70" fill="#de1ee6"/><rect x="450.67" y="292.80" width="1.69" height="14.70" fill="#de1ee6"/><rect x="455.04" y="292.80" width="1.04" height="14.70" fill="#de1ee6"/><rect x="458.54" y="292.80" width="1.23" height="14.70" fill="#de1ee6"/><rect x="461.65" y="292.80" width="1.13" height="14.70" fill="#de1ee6"/><rect x="465.02" y="292.80" width="1.18" height="14.70" fill="#de1ee6"/><rect x="468.28" y="292.80" width="0.72" height="14.70" fill="#de1ee6"/><rect x="467.80" y="292.80" width="1.20" height="14.70" fill="#de1ee6"/><rect x="563.00" y="293.00" width="12.00" height="3.00" fill="#272727"/><path d="M562.5 294C566.0 294 566.0 296.0 568.5 296.0S571.0 294 574.5 294" stroke="#d820dc" stroke-width="1.2" fill="none"/><rect x="575.00" y="292.80" width="30.00" height="14.70" fill="#3d263e"/><rect x="575.00" y="292.80" width="30.00" height="3.00" fill="#de1ee6"/><rect x="575.00" y="292.80" width="2.50" height="14.70" fill="#de1ee6"/><rect x="579.95" y="292.80" width="1.38" height="14.70" fill="#de1ee6"/><rect x="583.99" y="292.80" width="1.59" height="14.70" fill="#de1ee6"/><rect x="587.71" y="292.80" width="1.90" height="14.70" fill="#de1ee6"/><rect x="591.42" y="292.80" width="1.41" height="14.70" fill="#de1ee6"/><rect x="595.01" y="292.80" width="1.41" height="14.70" fill="#de1ee6"/><rect x="598.38" y="292.80" width="1.83" height="14.70" fill="#de1ee6"/><rect x="602.54" y="292.80" width="1.04" height="14.70" fill="#de1ee6"/><rect x="603.80" y="292.80" width="1.20" height="14.70" fill="#de1ee6"/><rect x="705.00" y="293.00" width="12.00" height="3.00" fill="#272727"/><path d="M704.5 294C708.0 294 708.0 296.0 710.5 296.0S713.0 294 716.5 294" stroke="#d820dc" stroke-width="1.2" fill="none"/><rect x="717.00" y="292.80" width="30.00" height="14.70" fill="#3d263e"/><rect x="717.00" y="292.80" width="30.00" height="3.00" fill="#de1ee6"/><rect x="717.00" y="292.80" width="2.50" height="14.70" fill="#de1ee6"/><rect x="722.06" y="292.80" width="1.34" height="14.70" fill="#de1ee6"/><rect x="726.02" y="292.80" width="1.96" height="14.70" fill="#de1ee6"/><rect x="730.92" y="292.80" width="1.42" height="14.70" fill="#de1ee6"/><rect x="735.28" y="292.80" width="1.64" height="14.70" fill="#de1ee6"/><rect x="739.24" y="292.80" width="1.14" height="14.70" fill="#de1ee6"/><rect x="743.01" y="292.80" width="1.56" height="14.70" fill="#de1ee6"/><rect x="745.80" y="292.80" width="1.20" height="14.70" fill="#de1ee6"/><path d="M88 335H148M148 335H290.8M290.8 335H439M439 323H575M575 323H717M717 335H857" stroke="#92d87c" stroke-width="1.3" fill="none"/><rect x="148.00" y="331.50" width="29.50" height="5.00" fill="#a0e88a"/><rect x="290.80" y="321.20" width="29.20" height="15.30" fill="#394436"/><rect x="290.80" y="321.20" width="29.20" height="3.00" fill="#a0e88a"/><rect x="290.80" y="321.20" width="2.50" height="15.30" fill="#a0e88a"/><rect x="295.27" y="321.20" width="1.35" height="15.30" fill="#a0e88a"/><rect x="298.90" y="321.20" width="1.00" height="15.30" fill="#a0e88a"/><rect x="301.32" y="321.20" width="1.57" height="15.30" fill="#a0e88a"/><rect x="304.87" y="321.20" width="1.14" height="15.30" fill="#a0e88a"/><rect x="308.00" y="321.20" width="1.89" height="15.30" fill="#a0e88a"/><rect x="311.60" y="321.20" width="1.43" height="15.30" fill="#a0e88a"/><rect x="314.58" y="321.20" width="1.29" height="15.30" fill="#a0e88a"/><rect x="318.25" y="321.20" width="1.38" height="15.30" fill="#a0e88a"/><rect x="318.80" y="321.20" width="1.20" height="15.30" fill="#a0e88a"/><rect x="439.00" y="321.20" width="30.00" height="15.30" fill="#394436"/><rect x="439.00" y="321.20" width="30.00" height="3.00" fill="#a0e88a"/><rect x="439.00" y="321.20" width="2.50" height="15.30" fill="#a0e88a"/><rect x="443.86" y="321.20" width="1.91" height="15.30" fill="#a0e88a"/><rect x="447.73" y="321.20" width="1.26" height="15.30" fill="#a0e88a"/><rect x="451.37" y="321.20" width="1.50" height="15.30" fill="#a0e88a"/><rect x="454.62" y="321.20" width="1.32" height="15.30" fill="#a0e88a"/><rect x="458.32" y="321.20" width="1.49" height="15.30" fill="#a0e88a"/><rect x="461.43" y="321.20" width="1.48" height="15.30" fill="#a0e88a"/><rect x="464.34" y="321.20" width="1.62" height="15.30" fill="#a0e88a"/><rect x="467.75" y="321.20" width="1.25" height="15.30" fill="#a0e88a"/><rect x="467.80" y="321.20" width="1.20" height="15.30" fill="#a0e88a"/><rect x="563.00" y="322.00" width="12.00" height="3.00" fill="#272727"/><path d="M562.5 323C566.0 323 566.0 325.0 568.5 325.0S571.0 323 574.5 323" stroke="#92d87c" stroke-width="1.2" fill="none"/><rect x="575.00" y="321.20" width="30.00" height="15.30" fill="#394436"/><rect x="575.00" y="321.20" width="30.00" height="3.00" fill="#a0e88a"/><rect x="575.00" y="321.20" width="2.50" height="15.30" fill="#a0e88a"/><rect x="579.66" y="321.20" width="1.83" height="15.30" fill="#a0e88a"/><rect x="582.80" y="321.20" width="1.53" height="15.30" fill="#a0e88a"/><rect x="585.93" y="321.20" width="1.94" height="15.30" fill="#a0e88a"/><rect x="590.03" y="321.20" width="1.25" height="15.30" fill="#a0e88a"/><rect x="592.87" y="321.20" width="1.15" height="15.30" fill="#a0e88a"/><rect x="596.41" y="321.20" width="1.29" height="15.30" fill="#a0e88a"/><rect x="599.67" y="321.20" width="1.47" height="15.30" fill="#a0e88a"/><rect x="603.16" y="321.20" width="1.60" height="15.30" fill="#a0e88a"/><rect x="603.80" y="321.20" width="1.20" height="15.30" fill="#a0e88a"/><rect x="705.00" y="322.00" width="12.00" height="3.00" fill="#272727"/><path d="M704.5 323C708.0 323 708.0 325.0 710.5 325.0S713.0 323 716.5 323" stroke="#92d87c" stroke-width="1.2" fill="none"/><rect x="717.00" y="321.20" width="30.00" height="15.30" fill="#394436"/><rect x="717.00" y="321.20" width="30.00" height="3.00" fill="#a0e88a"/><rect x="717.00" y="321.20" width="2.50" height="15.30" fill="#a0e88a"/><rect x="721.62" y="321.20" width="1.12" height="15.30" fill="#a0e88a"/><rect x="724.87" y="321.20" width="1.30" height="15.30" fill="#a0e88a"/><rect x="728.06" y="321.20" width="1.34" height="15.30" fill="#a0e88a"/><rect x="731.02" y="321.20" width="1.53" height="15.30" fill="#a0e88a"/><rect x="734.36" y="321.20" width="1.36" height="15.30" fill="#a0e88a"/><rect x="737.84" y="321.20" width="1.59" height="15.30" fill="#a0e88a"/><rect x="740.77" y="321.20" width="1.25" height="15.30" fill="#a0e88a"/><rect x="743.83" y="321.20" width="1.92" height="15.30" fill="#a0e88a"/><rect x="745.80" y="321.20" width="1.20" height="15.30" fill="#a0e88a"/><path d="M88 367H274M274 379H423M423 367H559M559 379H701M701 367H843.5M843.5 379H857" stroke="#e8a20c" stroke-width="1.3" fill="none"/><path d="M274.0 366.0V386.0" stroke="#e8a20c" stroke-width="1.4"/><path d="M423.0 362.0V380.0" stroke="#e8a20c" stroke-width="1.4"/><path d="M559.0 366.0V386.0" stroke="#e8a20c" stroke-width="1.4"/><path d="M701.0 362.0V380.0" stroke="#e8a20c" stroke-width="1.4"/><path d="M843.5 366.0V386.0" stroke="#e8a20c" stroke-width="1.4"/><rect x="148.00" y="361.80" width="29.50" height="10.00" fill="#e8a20c"/><ellipse cx="143.0" cy="367.0" rx="1.3" ry="1.6" fill="#e8a20c"/><ellipse cx="136.0" cy="367.0" rx="1.4" ry="1.8" fill="#e8a20c"/><path d="M138 367Q140 370 142 367" stroke="#e8a20c" stroke-width="1.2" fill="none"/><rect x="290.80" y="373.80" width="29.20" height="10.00" fill="#e8a20c"/><ellipse cx="285.8" cy="379.0" rx="1.3" ry="1.6" fill="#e8a20c"/><ellipse cx="278.8" cy="379.0" rx="1.4" ry="1.8" fill="#e8a20c"/><path d="M280.8 379Q282.8 382 284.8 379" stroke="#e8a20c" stroke-width="1.2" fill="none"/><rect x="439.00" y="361.80" width="30.00" height="10.00" fill="#e8a20c"/><ellipse cx="434.0" cy="367.0" rx="1.3" ry="1.6" fill="#e8a20c"/><ellipse cx="427.0" cy="367.0" rx="1.4" ry="1.8" fill="#e8a20c"/><path d="M429 367Q431 370 433 367" stroke="#e8a20c" stroke-width="1.2" fill="none"/><rect x="575.00" y="373.80" width="30.00" height="10.00" fill="#e8a20c"/><ellipse cx="570.0" cy="379.0" rx="1.3" ry="1.6" fill="#e8a20c"/><ellipse cx="563.0" cy="379.0" rx="1.4" ry="1.8" fill="#e8a20c"/><path d="M565 379Q567 382 569 379" stroke="#e8a20c" stroke-width="1.2" fill="none"/><rect x="717.00" y="361.80" width="30.00" height="10.00" fill="#e8a20c"/><ellipse cx="712.0" cy="367.0" rx="1.3" ry="1.6" fill="#e8a20c"/><ellipse cx="705.0" cy="367.0" rx="1.4" ry="1.8" fill="#e8a20c"/><path d="M707 367Q709 370 711 367" stroke="#e8a20c" stroke-width="1.2" fill="none"/><path d="M88 399H274M274 411H559M559 399H843.5M843.5 411H857" stroke="#ee1428" stroke-width="1.3" fill="none"/><path d="M274.0 398.0V418.0" stroke="#ee1428" stroke-width="1.4"/><path d="M559.0 398.0V418.0" stroke="#ee1428" stroke-width="1.4"/><path d="M843.5 398.0V418.0" stroke="#ee1428" stroke-width="1.4"/><path d="M559.0 394.0V412.0" stroke="#ee1428" stroke-width="1.4"/><rect x="148.00" y="393.50" width="29.50" height="10.50" fill="#ee1428"/><ellipse cx="142.0" cy="399.0" rx="1.6" ry="2.0" fill="#ee1428"/><ellipse cx="135.0" cy="399.0" rx="1.8" ry="2.2" fill="#ee1428"/><rect x="290.80" y="405.50" width="29.20" height="10.50" fill="#ee1428"/><ellipse cx="284.8" cy="411.0" rx="1.6" ry="2.0" fill="#ee1428"/><ellipse cx="277.8" cy="411.0" rx="1.8" ry="2.2" fill="#ee1428"/><rect x="439.00" y="405.50" width="30.00" height="10.50" fill="#ee1428"/><ellipse cx="433.0" cy="411.0" rx="1.6" ry="2.0" fill="#ee1428"/><ellipse cx="426.0" cy="411.0" rx="1.8" ry="2.2" fill="#ee1428"/><rect x="575.00" y="393.50" width="30.00" height="10.50" fill="#ee1428"/><ellipse cx="569.0" cy="399.0" rx="1.6" ry="2.0" fill="#ee1428"/><ellipse cx="562.0" cy="399.0" rx="1.8" ry="2.2" fill="#ee1428"/><rect x="717.00" y="393.50" width="30.00" height="10.50" fill="#ee1428"/><ellipse cx="711.0" cy="399.0" rx="1.6" ry="2.0" fill="#ee1428"/><ellipse cx="704.0" cy="399.0" rx="1.8" ry="2.2" fill="#ee1428"/><path d="M88 425H857" stroke="#1a8ed0" stroke-width="1.3" fill="none"/><rect x="148.00" y="419.50" width="29.50" height="11.00" fill="#1a8ed0"/><ellipse cx="142.0" cy="425.0" rx="1.3" ry="1.6" fill="#1a8ed0"/><ellipse cx="135.0" cy="425.0" rx="1.6" ry="2.0" fill="#1a8ed0"/><rect x="290.80" y="419.50" width="29.20" height="11.00" fill="#1a8ed0"/><ellipse cx="284.8" cy="425.0" rx="1.3" ry="1.6" fill="#1a8ed0"/><ellipse cx="277.8" cy="425.0" rx="1.6" ry="2.0" fill="#1a8ed0"/><rect x="439.00" y="419.50" width="30.00" height="11.00" fill="#1a8ed0"/><ellipse cx="433.0" cy="425.0" rx="1.3" ry="1.6" fill="#1a8ed0"/><ellipse cx="426.0" cy="425.0" rx="1.6" ry="2.0" fill="#1a8ed0"/><rect x="575.00" y="419.50" width="30.00" height="11.00" fill="#1a8ed0"/><ellipse cx="569.0" cy="425.0" rx="1.3" ry="1.6" fill="#1a8ed0"/><ellipse cx="562.0" cy="425.0" rx="1.6" ry="2.0" fill="#1a8ed0"/><rect x="717.00" y="419.50" width="30.00" height="11.00" fill="#1a8ed0"/><ellipse cx="711.0" cy="425.0" rx="1.3" ry="1.6" fill="#1a8ed0"/><ellipse cx="704.0" cy="425.0" rx="1.6" ry="2.0" fill="#1a8ed0"/><path d="M274.0 418.0V433.0" stroke="#1a8ed0" stroke-width="1.2"/><ellipse cx="280.0" cy="425.0" rx="1.2" ry="1.5" fill="#1a8ed0"/><path d="M559.0 418.0V433.0" stroke="#1a8ed0" stroke-width="1.2"/><ellipse cx="565.0" cy="425.0" rx="1.2" ry="1.5" fill="#1a8ed0"/><path d="M843.5 418.0V433.0" stroke="#1a8ed0" stroke-width="1.2"/><ellipse cx="849.5" cy="425.0" rx="1.2" ry="1.5" fill="#1a8ed0"/><path d="M88 458H857" stroke="#7c50c4" stroke-width="1.2" fill="none"/><path d="M88 471H857" stroke="#c87cb0" stroke-width="1.2" fill="none"/><rect x="148.00" y="453.50" width="29.50" height="9.50" fill="#8452d4"/><rect x="148.00" y="466.00" width="29.50" height="10.00" fill="#d384bb"/><rect x="135.50" y="457.00" width="7.00" height="2.50" fill="#272727"/><path d="M135 458V471H139V458.5Q139 458 142 458" stroke="#7c50c4" stroke-width="1.2" fill="none"/><path d="M135.5 471V487M135.5 483H140.5V471H145" stroke="#c87cb0" stroke-width="1.2" fill="none"/><rect x="290.80" y="453.50" width="29.20" height="9.50" fill="#8452d4"/><rect x="290.80" y="466.00" width="29.20" height="10.00" fill="#d384bb"/><rect x="278.30" y="457.00" width="7.00" height="2.50" fill="#272727"/><path d="M277.8 458V471H281.8V458.5Q281.8 458 284.8 458" stroke="#7c50c4" stroke-width="1.2" fill="none"/><path d="M278.3 471V487M278.3 483H283.3V471H287.8" stroke="#c87cb0" stroke-width="1.2" fill="none"/><rect x="439.00" y="453.50" width="30.00" height="9.50" fill="#8452d4"/><rect x="439.00" y="466.00" width="30.00" height="10.00" fill="#d384bb"/><rect x="426.50" y="457.00" width="7.00" height="2.50" fill="#272727"/><path d="M426 458V471H430V458.5Q430 458 433 458" stroke="#7c50c4" stroke-width="1.2" fill="none"/><path d="M426.5 471V487M426.5 483H431.5V471H436" stroke="#c87cb0" stroke-width="1.2" fill="none"/><rect x="575.00" y="453.50" width="30.00" height="9.50" fill="#8452d4"/><rect x="575.00" y="466.00" width="30.00" height="10.00" fill="#d384bb"/><rect x="562.50" y="457.00" width="7.00" height="2.50" fill="#272727"/><path d="M562 458V471H566V458.5Q566 458 569 458" stroke="#7c50c4" stroke-width="1.2" fill="none"/><path d="M562.5 471V487M562.5 483H567.5V471H572" stroke="#c87cb0" stroke-width="1.2" fill="none"/><rect x="717.00" y="453.50" width="30.00" height="9.50" fill="#8452d4"/><rect x="717.00" y="466.00" width="30.00" height="10.00" fill="#d384bb"/><rect x="704.50" y="457.00" width="7.00" height="2.50" fill="#272727"/><path d="M704 458V471H708V458.5Q708 458 711 458" stroke="#7c50c4" stroke-width="1.2" fill="none"/><path d="M704.5 471V487M704.5 483H709.5V471H714" stroke="#c87cb0" stroke-width="1.2" fill="none"/><path d="M88 515.6H857" stroke="#e42a74" stroke-width="1.3" fill="none"/><path d="M88 532.6H857" stroke="#0e8696" stroke-width="1.3" fill="none"/><rect x="148.00" y="499.00" width="29.50" height="22.00" fill="#f0287a"/><rect x="148.00" y="524.00" width="29.50" height="17.50" fill="#10899a"/><ellipse cx="132.0" cy="515.6" rx="1.3" ry="2.6" fill="#e42a74"/><ellipse cx="135.5" cy="515.6" rx="1.3" ry="3.2" fill="#e42a74"/><ellipse cx="142.5" cy="515.6" rx="1.3" ry="2.4" fill="#e42a74"/><path d="M131 532.6V519.6H134V544.6" stroke="#0e8696" stroke-width="1.2" fill="none"/><ellipse cx="142.5" cy="532.6" rx="1.2" ry="2.5" fill="#0e8696"/><rect x="290.80" y="499.00" width="29.20" height="22.00" fill="#f0287a"/><rect x="290.80" y="524.00" width="29.20" height="17.50" fill="#10899a"/><ellipse cx="274.8" cy="515.6" rx="1.3" ry="2.6" fill="#e42a74"/><ellipse cx="278.3" cy="515.6" rx="1.3" ry="3.2" fill="#e42a74"/><ellipse cx="285.3" cy="515.6" rx="1.3" ry="2.4" fill="#e42a74"/><path d="M273.8 532.6V519.6H276.8V544.6" stroke="#0e8696" stroke-width="1.2" fill="none"/><ellipse cx="285.3" cy="532.6" rx="1.2" ry="2.5" fill="#0e8696"/><rect x="439.00" y="499.00" width="30.00" height="22.00" fill="#f0287a"/><rect x="439.00" y="524.00" width="30.00" height="17.50" fill="#10899a"/><ellipse cx="423.0" cy="515.6" rx="1.3" ry="2.6" fill="#e42a74"/><ellipse cx="426.5" cy="515.6" rx="1.3" ry="3.2" fill="#e42a74"/><ellipse cx="433.5" cy="515.6" rx="1.3" ry="2.4" fill="#e42a74"/><path d="M422 532.6V519.6H425V544.6" stroke="#0e8696" stroke-width="1.2" fill="none"/><ellipse cx="433.5" cy="532.6" rx="1.2" ry="2.5" fill="#0e8696"/><rect x="575.00" y="499.00" width="30.00" height="22.00" fill="#f0287a"/><rect x="575.00" y="524.00" width="30.00" height="17.50" fill="#10899a"/><ellipse cx="559.0" cy="515.6" rx="1.3" ry="2.6" fill="#e42a74"/><ellipse cx="562.5" cy="515.6" rx="1.3" ry="3.2" fill="#e42a74"/><ellipse cx="569.5" cy="515.6" rx="1.3" ry="2.4" fill="#e42a74"/><path d="M558 532.6V519.6H561V544.6" stroke="#0e8696" stroke-width="1.2" fill="none"/><ellipse cx="569.5" cy="532.6" rx="1.2" ry="2.5" fill="#0e8696"/><rect x="717.00" y="499.00" width="30.00" height="22.00" fill="#f0287a"/><rect x="717.00" y="524.00" width="30.00" height="17.50" fill="#10899a"/><ellipse cx="701.0" cy="515.6" rx="1.3" ry="2.6" fill="#e42a74"/><ellipse cx="704.5" cy="515.6" rx="1.3" ry="3.2" fill="#e42a74"/><ellipse cx="711.5" cy="515.6" rx="1.3" ry="2.4" fill="#e42a74"/><path d="M700 532.6V519.6H703V544.6" stroke="#0e8696" stroke-width="1.2" fill="none"/><ellipse cx="711.5" cy="532.6" rx="1.2" ry="2.5" fill="#0e8696"/><rect x="849.00" y="457.00" width="7.00" height="2.50" fill="#272727"/><path d="M848.5 458V471H852.5V458.5Q852.5 458 855.5 458" stroke="#7c50c4" stroke-width="1.2" fill="none"/><path d="M849.0 471V487M849.0 483H854.0V471H858.5" stroke="#c87cb0" stroke-width="1.2" fill="none"/><ellipse cx="845.5" cy="515.6" rx="1.3" ry="2.6" fill="#e42a74"/><ellipse cx="849.0" cy="515.6" rx="1.3" ry="3.2" fill="#e42a74"/><ellipse cx="856.0" cy="515.6" rx="1.3" ry="2.4" fill="#e42a74"/><path d="M844.5 532.6V519.6H847.5V544.6" stroke="#0e8696" stroke-width="1.2" fill="none"/><ellipse cx="856.0" cy="532.6" rx="1.2" ry="2.5" fill="#0e8696"/><ellipse cx="856.5" cy="379.0" rx="1.3" ry="1.6" fill="#e8a20c"/><ellipse cx="849.5" cy="379.0" rx="1.4" ry="1.8" fill="#e8a20c"/><ellipse cx="855.5" cy="411.0" rx="1.6" ry="2.0" fill="#ee1428"/><ellipse cx="848.5" cy="411.0" rx="1.8" ry="2.2" fill="#ee1428"/><ellipse cx="848.5" cy="425.0" rx="1.4" ry="1.8" fill="#1a8ed0"/><rect x="857" y="154" width="30" height="397" fill="#3b3b3b"/><path d="M856.5 154V551" stroke="#555" stroke-width="1"/><text x="84.2" y="156.2" text-anchor="end" font-size="6" fill="#cfc560">13.5</text><text x="84.2" y="205.7" text-anchor="end" font-size="6" fill="#cfc560">-6.5</text><text x="84.2" y="255.3" text-anchor="end" font-size="6" fill="#cfc560">-26.5</text><text x="84.2" y="304.8" text-anchor="end" font-size="6" fill="#cfc560">-46.5</text><text x="84.2" y="354.4" text-anchor="end" font-size="6" fill="#cfc560">-66.5</text><text x="84.2" y="403.9" text-anchor="end" font-size="6" fill="#cfc560">-86.5</text><text x="84.2" y="453.4" text-anchor="end" font-size="6" fill="#cfc560">-106.5</text><text x="84.2" y="503.0" text-anchor="end" font-size="6" fill="#cfc560">-126.5</text><text x="84.2" y="552.5" text-anchor="end" font-size="6" fill="#cfc560">-146.5</text><text x="101.3" y="558.8" text-anchor="middle" font-size="6" fill="#eeeeee">-250 &#956;</text><text x="175.4" y="558.8" text-anchor="middle" font-size="6" fill="#eeeeee">-200 &#956;</text><text x="249.6" y="558.8" text-anchor="middle" font-size="6" fill="#eeeeee">-150 &#956;</text><text x="323.7" y="558.8" text-anchor="middle" font-size="6" fill="#eeeeee">-100 &#956;</text><text x="397.8" y="558.8" text-anchor="middle" font-size="6" fill="#eeeeee">-50 &#956;</text><text x="471.9" y="558.8" text-anchor="middle" font-size="6" fill="#eeeeee">0</text><text x="546.1" y="558.8" text-anchor="middle" font-size="6" fill="#eeeeee">50 &#956;</text><text x="620.2" y="558.8" text-anchor="middle" font-size="6" fill="#eeeeee">100 &#956;</text><text x="694.3" y="558.8" text-anchor="middle" font-size="6" fill="#eeeeee">150 &#956;</text><text x="768.5" y="558.8" text-anchor="middle" font-size="6" fill="#eeeeee">200 &#956;</text><text x="842.6" y="558.8" text-anchor="middle" font-size="6" fill="#eeeeee">250 &#956;</text><text x="471.5" y="569" text-anchor="middle" font-size="6" fill="#7a7a7a" font-style="italic">Time</text><text x="0" y="0" font-size="6.3" fill="#7a7a7a" transform="translate(57.8 352) rotate(-90)" text-anchor="middle">Volts</text><path d="M77.6 183.2H82.6L87 187.8L82.6 192.4H77.6Z" fill="#f0e23a" stroke="#f2f2f2" stroke-width="1.2" stroke-linejoin="round"/><text x="81.3" y="189.5" text-anchor="middle" font-size="4.6" fill="#3a3a3a">0</text><path d="M77.6 208.7H82.6L87 213.3L82.6 217.9H77.6Z" fill="#20a678" stroke="#f2f2f2" stroke-width="1.2" stroke-linejoin="round"/><text x="81.3" y="215.0" text-anchor="middle" font-size="4.6" fill="#3a3a3a">1</text><path d="M77.6 246.5H82.6L87 251.1L82.6 255.7H77.6Z" fill="#58b0e8" stroke="#f2f2f2" stroke-width="1.2" stroke-linejoin="round"/><text x="81.3" y="252.8" text-anchor="middle" font-size="4.6" fill="#3a3a3a">1</text><path d="M77.6 270.2H82.6L87 274.8L82.6 279.4H77.6Z" fill="#e66e10" stroke="#f2f2f2" stroke-width="1.2" stroke-linejoin="round"/><text x="81.3" y="276.5" text-anchor="middle" font-size="4.6" fill="#3a3a3a">4</text><path d="M77.6 301.4H82.6L87 306.0L82.6 310.6H77.6Z" fill="#de1ee6" stroke="#f2f2f2" stroke-width="1.2" stroke-linejoin="round"/><text x="81.3" y="307.7" text-anchor="middle" font-size="4.6" fill="#3a3a3a">2</text><path d="M77.6 330.4H82.6L87 335.0L82.6 339.6H77.6Z" fill="#a0e88a" stroke="#f2f2f2" stroke-width="1.2" stroke-linejoin="round"/><text x="81.3" y="336.7" text-anchor="middle" font-size="4.6" fill="#3a3a3a">5</text><path d="M77.6 374.4H82.6L87 379.0L82.6 383.6H77.6Z" fill="#e8a20c" stroke="#f2f2f2" stroke-width="1.2" stroke-linejoin="round"/><text x="81.3" y="380.7" text-anchor="middle" font-size="4.6" fill="#3a3a3a">6</text><path d="M77.6 406.4H82.6L87 411.0L82.6 415.6H77.6Z" fill="#ee1428" stroke="#f2f2f2" stroke-width="1.2" stroke-linejoin="round"/><text x="81.3" y="412.7" text-anchor="middle" font-size="4.6" fill="#3a3a3a">8</text><path d="M77.6 420.4H82.6L87 425.0L82.6 429.6H77.6Z" fill="#1a8ed0" stroke="#f2f2f2" stroke-width="1.2" stroke-linejoin="round"/><text x="81.3" y="426.7" text-anchor="middle" font-size="4.6" fill="#3a3a3a">9</text><path d="M77.6 465.4H82.6L87 470.0L82.6 474.6H77.6Z" fill="#8452d4" stroke="#f2f2f2" stroke-width="1.2" stroke-linejoin="round"/><text x="81.3" y="471.7" text-anchor="middle" font-size="4.6" fill="#3a3a3a">6</text><path d="M77.6 478.4H82.6L87 483.0L82.6 487.6H77.6Z" fill="#d384bb" stroke="#f2f2f2" stroke-width="1.2" stroke-linejoin="round"/><text x="81.3" y="484.7" text-anchor="middle" font-size="4.6" fill="#3a3a3a">7</text><path d="M77.6 511.0H82.6L87 515.6L82.6 520.2H77.6Z" fill="#f0287a" stroke="#f2f2f2" stroke-width="1.2" stroke-linejoin="round"/><text x="81.3" y="517.3" text-anchor="middle" font-size="4.6" fill="#3a3a3a">8</text><path d="M77.6 528.0H82.6L87 532.6L82.6 537.2H77.6Z" fill="#10899a" stroke="#f2f2f2" stroke-width="1.2" stroke-linejoin="round"/><text x="81.3" y="534.3" text-anchor="middle" font-size="4.6" fill="#3a3a3a">1</text><path d="M286.6 144.4H296.4V150.2L291.5 153.2L286.6 150.2Z" fill="#303830" stroke="#7ad07a" stroke-width="1.1" stroke-linejoin="round"/><text x="291.5" y="150.4" text-anchor="middle" font-size="4.5" fill="#e0e0e0">T</text><text x="292" y="161" text-anchor="middle" font-size="5.6" fill="#f0f0f0">121.81 &#956;s</text><path d="M866.6 319.3H862.2L858 323.6L862.2 327.9H866.6Z" fill="#303830" stroke="#a0e88a" stroke-width="1.1" stroke-linejoin="round"/><text x="863.2" y="325.3" text-anchor="middle" font-size="4.3" fill="#ddd">T</text></svg>
<div class="a" style="left:49px;top:572px;width:834px;height:2px;background:#cfcfcf;"></div>
<div class="a" style="left:49px;top:574px;width:834px;height:17px;background:#e7e7e7;"></div>
<svg class="a" style="left:59px;top:579px" width="6" height="9" viewBox="0 0 6 9"><path d="M1 1L4.8 4.5L1 8" fill="none" stroke="#222" stroke-width="1.3"/></svg>
<div class="t" style="left:75.5px;top:579.75px;font-size:7.30px;transform:scaleX(0.8696);transform-origin:0 50%;color:#222;font-weight:bold;">Measurements</div>
<div class="t" style="left:747px;top:580.29px;font-size:7.82px;transform:scaleX(0.8696);transform-origin:0 50%;color:#a8a8a8;font-weight:normal;">Add/Remove</div>
<div class="a" style="left:793px;top:575px;width:1px;height:15px;background:#d8d8d8;"></div>
<div class="a" style="left:822px;top:575px;width:1px;height:15px;background:#d8d8d8;"></div>
<div class="a" style="left:851px;top:575px;width:1px;height:15px;background:#d8d8d8;"></div>
<div class="t" style="left:804px;top:578.60px;font-size:9.20px;transform:scaleX(0.8696);transform-origin:0 50%;color:#888;font-weight:normal;">&middot;&middot;&middot;</div>
<svg class="a" style="left:833px;top:578px" width="9" height="10" viewBox="0 0 9 10"><path d="M6.8 3.2A3.3 3.3 0 1 1 3 2.4" fill="none" stroke="#999" stroke-width=".9"/><path d="M2 1L4 2.3L2.6 4" fill="none" stroke="#999" stroke-width=".9"/></svg>
<svg class="a" style="left:862px;top:579px" width="10" height="8" viewBox="0 0 10 8"><path d="M0.8 4Q5 -0.5 9.2 4Q5 8.5 0.8 4Z" fill="none" stroke="#999" stroke-width=".9"/><circle cx="5" cy="4" r="1.5" fill="#999"/></svg>
<div class="a" style="left:0;top:0;width:1070px;height:591px;overflow:hidden"><div class="a" style="left:882px;top:90px;width:188px;height:501px;background:#f6f6f6;"></div><div class="t" style="left:896.8px;top:98.99px;font-size:12.72px;transform:scaleX(0.8696);transform-origin:0 50%;color:#3a6f9a;font-weight:normal;-webkit-text-stroke:0">OSCILLOSCOPE</div><div class="t" style="left:896.8px;top:113.70px;font-size:8.84px;transform:scaleX(0.8696);transform-origin:0 50%;color:#333;font-weight:bold;">PXIe-5108 (8CH)</div><svg class="a" style="left:1046px;top:101px" width="9" height="9" viewBox="0 0 9 9"><circle cx="4.5" cy="4.5" r="2.6" fill="none" stroke="#333" stroke-width="1.5"/><path d="M4.5 0.3V1.8M4.5 7.2V8.7M0.3 4.5H1.8M7.2 4.5H8.7M1.5 1.5L2.6 2.6M6.4 6.4L7.5 7.5M7.5 1.5L6.4 2.6M2.6 6.4L1.5 7.5" stroke="#333" stroke-width="1.4"/></svg><svg class="a" style="left:997px;top:115px" width="10" height="10" viewBox="0 0 10 10"><rect x="1" y="1" width="5.5" height="5.5" fill="#666"/><rect x="3.5" y="3.5" width="5.5" height="5.5" fill="#333" stroke="#f4f4f4" stroke-width=".7"/></svg><svg class="a" style="left:1013px;top:116px" width="10" height="8" viewBox="0 0 10 8"><path d="M1 1H4M1 4H4M1 7H4M6 1H9M6 4H9M6 7H9M5.5 1V7" stroke="#888" stroke-width=".8" fill="none"/></svg><div class="a" style="left:1026px;top:114px;width:0.8px;height:12px;background:#c8c8c8;"></div><svg class="a" style="left:1030px;top:115px" width="10" height="10" viewBox="0 0 10 10"><circle cx="5" cy="5" r="4.3" fill="#9a9a9a"/><path d="M5 4.2V7.6" stroke="#f4f4f4" stroke-width="1.2"/><circle cx="5" cy="2.7" r=".7" fill="#f4f4f4"/></svg><svg class="a" style="left:1046px;top:115px" width="10" height="10" viewBox="0 0 10 10"><path d="M2 3.2A3.8 3.8 0 1 1 1.3 5.6" fill="none" stroke="#aaa" stroke-width=".9"/><path d="M0.8 1.6L1.9 3.6L3.9 3" fill="none" stroke="#aaa" stroke-width=".9"/><path d="M5.2 3V5.3L6.6 6.4" fill="none" stroke="#aaa" stroke-width=".8"/></svg><div class="btn" style="left:896.5px;top:131px;width:48px;height:17px"></div><div class="a" style="left:932.5px;top:132px;width:1px;height:15px;background:#c4c6c8;"></div><div class="t" style="left:897px;width:35.5px;text-align:center;top:136.86px;font-size:6.79px;transform:scaleX(0.8696);color:#222">AUTO</div><div class="tri" style="left:936px;top:138.5px;border-left-width:2.4px;border-right-width:2.4px;border-top-width:3.2px;border-top-color:#555"></div><div class="btn" style="left:953px;top:131px;width:48px;height:17px;border-color:#68c298;background:linear-gradient(#eaf1ed,#dfe7e2)"></div><div class="t" style="left:953px;width:48px;text-align:center;top:136.98px;font-size:6.67px;transform:scaleX(0.8696);color:#3e9a6c">RUN/STOP</div><div class="btn" style="left:1009px;top:131px;width:48px;height:17px;"></div><div class="t" style="left:1009px;width:48px;text-align:center;top:136.98px;font-size:6.67px;transform:scaleX(0.8696);color:#222">SINGLE</div><div class="t" style="left:896.8px;top:159.73px;font-size:12.63px;transform:scaleX(0.8696);transform-origin:0 50%;color:#666;font-weight:normal;-webkit-text-stroke:0">Horizontal &amp; Acq.</div><div class="t" style="left:993px;top:162.10px;font-size:7.11px;transform:scaleX(0.8696);transform-origin:0 50%;color:#3aa86c;font-weight:normal;font-style:italic">Triggered</div><svg class="a" style="left:1022px;top:160.5px" width="15" height="9" viewBox="0 0 15 9"><path d="M1 7.5H3V1.5M4.5 1.5H10M11.5 1.5V7.5H14" fill="none" stroke="#3aa86c" stroke-width="1.2"/></svg><div class="a" style="left:1048.0px;top:164.3px;width:1.4px;height:1.4px;background:#444;border-radius:50%"></div><div class="a" style="left:1050.6px;top:164.3px;width:1.4px;height:1.4px;background:#444;border-radius:50%"></div><div class="a" style="left:1053.2px;top:164.3px;width:1.4px;height:1.4px;background:#444;border-radius:50%"></div><div class="lbl" style="left:896.8px;top:180.68px">TIME PER DIVISION</div><div class="lbl" style="left:1009px;top:180.68px">X POSITION</div><div class="dd" style="left:896.5px;top:188.5px;width:64.0px;height:13.0px"></div><div class="t" style="left:902.0px;top:191.83px;font-size:7.24px;transform:scaleX(0.8696);transform-origin:0 50%;color:#222;font-weight:normal;">50 &#956;s</div><div class="tri" style="left:951.0px;top:193.4px;border-left-width:2.6px;border-right-width:2.6px;border-top-width:3.6px"></div><div class="btn" style="left:963.5px;top:188.5px;width:17.0px;height:13.0px"></div><svg class="a" style="left:963.5px;top:188.5px" width="17.0" height="13.0" viewBox="0 0 17.0 13.0"><circle cx="3.6" cy="6.5" r=".9" fill="#333"/><path d="M5.5 9.7H6.8C8.6 9.7 8.4 3.3 10.2 3.3C11.6 3.3 11.8 5.5 12.4 7.0" fill="none" stroke="#333" stroke-width=".8"/></svg><div class="btn" style="left:983px;top:188.5px;width:18px;height:13.0px"></div><svg class="a" style="left:983px;top:188.5px" width="18" height="13.0" viewBox="0 0 18 13.0"><path d="M5 9.7C7 9.7 6.6 3.3 8.6 3.3" fill="none" stroke="#333" stroke-width=".8"/><path d="M5.8 7.7V10.1" stroke="#333" stroke-width=".6"/><path d="M12.2 5.7h3l-1.5 2z" fill="#333"/></svg><div class="tb" style="left:1009px;top:188.5px;width:48px;height:13.0px"></div><div class="t" style="left:1015px;top:192.41px;font-size:6.90px;transform:scaleX(0.8696);transform-origin:0 50%;color:#222;font-weight:normal;">121.81 &#956;s</div><div class="lbl" style="left:896.8px;top:209.88px">SAMPLE RATE</div><div class="lbl" style="left:940px;top:209.88px">METHOD</div><div class="lbl" style="left:976.3px;top:209.88px">MODE</div><div class="val" style="left:896.8px;top:221.21px">125.00 MS/s</div><div class="val" style="left:940px;top:221.21px">Real time</div><div class="val" style="left:976.3px;top:221.21px">Sample</div><div class="a" style="left:883px;top:236px;width:187px;height:1.8px;background:#c9c9c9;"></div><div class="t" style="left:896.8px;top:245.79px;font-size:11.94px;transform:scaleX(0.8696);transform-origin:0 50%;color:#666;font-weight:normal;-webkit-text-stroke:0">Trigger</div><div class="dd" style="left:940px;top:244.7px;width:52px;height:13.0px"></div><div class="t" style="left:945.5px;top:248.03px;font-size:7.24px;transform:scaleX(0.8696);transform-origin:0 50%;color:#222;font-weight:normal;">Edge</div><div class="tri" style="left:982.5px;top:249.6px;border-left-width:2.6px;border-right-width:2.6px;border-top-width:3.6px"></div><div class="btn" style="left:1001px;top:245px;width:34.5px;height:12.699999999999989px;"></div><div class="t" style="left:1001px;width:34.5px;text-align:center;top:248.83px;font-size:6.67px;transform:scaleX(0.8696);color:#222">FORCE</div><div class="a" style="left:1048.0px;top:250.3px;width:1.4px;height:1.4px;background:#444;border-radius:50%"></div><div class="a" style="left:1050.6px;top:250.3px;width:1.4px;height:1.4px;background:#444;border-radius:50%"></div><div class="a" style="left:1053.2px;top:250.3px;width:1.4px;height:1.4px;background:#444;border-radius:50%"></div><div class="lbl" style="left:896.8px;top:267.08px">SOURCE</div><div class="lbl" style="left:1009px;top:267.08px">MODE</div><div class="dd" style="left:896.5px;top:274.6px;width:104.5px;height:12.799999999999955px"></div><div class="t" style="left:902.0px;top:277.83px;font-size:7.24px;transform:scaleX(0.8696);transform-origin:0 50%;color:#222;font-weight:normal;">Blue Bottom</div><div class="tri" style="left:991.5px;top:279.4px;border-left-width:2.6px;border-right-width:2.6px;border-top-width:3.6px"></div><div class="dd" style="left:1009px;top:274.6px;width:48px;height:12.799999999999955px"></div><div class="t" style="left:1014.5px;top:277.83px;font-size:7.24px;transform:scaleX(0.8696);transform-origin:0 50%;color:#222;font-weight:normal;">Normal</div><div class="tri" style="left:1047.5px;top:279.4px;border-left-width:2.6px;border-right-width:2.6px;border-top-width:3.6px"></div><div class="lbl" style="left:896.8px;top:296.38px">SLOPE</div><div class="lbl" style="left:953px;top:296.38px">LEVEL</div><div class="dd" style="left:896.5px;top:304px;width:47.799999999999955px;height:12.600000000000023px"></div><div class="t" style="left:902.0px;top:307.13px;font-size:7.24px;transform:scaleX(0.8696);transform-origin:0 50%;color:#222;font-weight:normal;">Rising</div><div class="tri" style="left:934.8px;top:308.7px;border-left-width:2.6px;border-right-width:2.6px;border-top-width:3.6px"></div><div class="tb" style="left:953px;top:304px;width:48px;height:12.600000000000023px"></div><div class="t" style="left:959px;top:307.71px;font-size:6.90px;transform:scaleX(0.8696);transform-origin:0 50%;color:#222;font-weight:normal;">4.692 V</div><div class="btn" style="left:1009px;top:304px;width:48px;height:12.600000000000023px;"></div><div class="t" style="left:1009px;width:48px;text-align:center;top:307.78px;font-size:6.67px;transform:scaleX(0.8696);color:#222">SET 50%</div><div class="a" style="left:1061px;top:239px;width:9px;height:352px;background:#f0f0f0;"></div><div class="a" style="left:1062.5px;top:249px;width:5.5px;height:90px;background:#a9a9a9;"></div><div class="a" style="left:1063px;top:241px;width:0;height:0;border-left:2.5px solid transparent;border-right:2.5px solid transparent;border-bottom:3px solid #9a9a9a"></div><div class="a" style="left:1063px;top:584.5px;width:0;height:0;border-left:2.5px solid transparent;border-right:2.5px solid transparent;border-top:3px solid #9a9a9a"></div><div class="t" style="left:896.8px;top:331.31px;font-size:11.51px;transform:scaleX(0.8696);transform-origin:0 50%;color:#666;font-weight:normal;-webkit-text-stroke:0">Channels</div><div class="t" style="left:896.8px;top:346.16px;font-size:8.74px;transform:scaleX(0.8696);transform-origin:0 50%;color:#333;font-weight:bold;">PXI1Slot5 &nbsp;&middot;&nbsp; PXIe-5108 (8CH) &nbsp;&middot;&nbsp; Slot 5</div><div class="a" style="left:883px;top:356px;width:3px;height:80px;background:#ebe23a;"></div><div class="a" style="left:896.8px;top:362.3px;width:11px;height:11px;background:#ebe23a;"></div><div class="t" style="left:900.3px;top:365.29px;font-size:7.13px;transform:scaleX(0.8696);transform-origin:0 50%;color:#fff;font-weight:normal;">0</div><div class="t" style="left:911.5px;top:365.49px;font-size:7.13px;transform:scaleX(0.8696);transform-origin:0 50%;color:#333;font-weight:normal;">Red Top</div><div class="a" style="left:1000.5px;top:361.5px;width:35px;height:12.5px;border:1px solid #c8c8c8;background:#e6e6e6"></div><div class="a" style="left:1018px;top:361.5px;width:17.5px;height:12.5px;background:#2f7cbe;"></div><div class="t" style="left:1021.4px;top:364.65px;font-size:7.59px;transform:scaleX(0.8696);transform-origin:0 50%;color:#fff;font-weight:normal;">ON</div><div class="a" style="left:1048.0px;top:366.8px;width:1.4px;height:1.4px;background:#444;border-radius:50%"></div><div class="a" style="left:1050.6px;top:366.8px;width:1.4px;height:1.4px;background:#444;border-radius:50%"></div><div class="a" style="left:1053.2px;top:366.8px;width:1.4px;height:1.4px;background:#444;border-radius:50%"></div><div class="lbl" style="left:896.8px;top:382.98px">VOLTS PER DIVISION</div><div class="lbl" style="left:1009px;top:382.98px">Y POSITION</div><div class="dd" style="left:896.5px;top:390.5px;width:64.0px;height:13.100000000000023px"></div><div class="t" style="left:902.0px;top:393.88px;font-size:7.24px;transform:scaleX(0.8696);transform-origin:0 50%;color:#222;font-weight:normal;">20 V</div><div class="tri" style="left:951.0px;top:395.4px;border-left-width:2.6px;border-right-width:2.6px;border-top-width:3.6px"></div><div class="btn" style="left:963.5px;top:390.5px;width:17.0px;height:13.100000000000023px"></div><svg class="a" style="left:963.5px;top:390.5px" width="17.0" height="13.100000000000023" viewBox="0 0 17.0 13.100000000000023"><circle cx="3.6" cy="6.6" r=".9" fill="#333"/><path d="M5.5 9.8H6.8C8.6 9.8 8.4 3.4 10.2 3.4C11.6 3.4 11.8 5.6 12.4 7.1" fill="none" stroke="#333" stroke-width=".8"/></svg><div class="btn" style="left:983px;top:390.5px;width:18px;height:13.100000000000023px"></div><svg class="a" style="left:983px;top:390.5px" width="18" height="13.100000000000023" viewBox="0 0 18 13.100000000000023"><path d="M3 7.4C5 4.4 7 4.4 8.5 6.6S10.5 8.1 11 7.6" fill="none" stroke="#333" stroke-width=".8"/><path d="M12.3 5.8h3l-1.5 2z" fill="#333"/></svg><div class="tb" style="left:1009px;top:390.5px;width:48px;height:13.100000000000023px"></div><div class="t" style="left:1015px;top:394.46px;font-size:6.90px;transform:scaleX(0.8696);transform-origin:0 50%;color:#222;font-weight:normal;">3.324 div</div><div class="lbl" style="left:896.8px;top:412.48px">COUPLING</div><div class="lbl" style="left:932.5px;top:412.48px">PROBE</div><div class="lbl" style="left:958.8px;top:412.48px">BANDWIDTH</div><div class="lbl" style="left:998.8px;top:412.48px">INPUT</div><div class="lbl" style="left:1023.3px;top:412.48px">RANGE</div><div class="val" style="left:896.8px;top:423.41px">DC</div><div class="val" style="left:932.5px;top:423.41px">1 X</div><div class="val" style="left:958.8px;top:423.41px">100 MHz</div><div class="val" style="left:998.8px;top:423.41px">1 M&#937;</div><div class="val" style="left:1023.3px;top:423.41px">80 V</div><div class="a" style="left:883px;top:437px;width:3px;height:80px;background:#4aa3df;"></div><div class="a" style="left:896.8px;top:443.3px;width:11px;height:11px;background:#4aa3df;"></div><div class="t" style="left:900.3px;top:446.29px;font-size:7.13px;transform:scaleX(0.8696);transform-origin:0 50%;color:#fff;font-weight:normal;">1</div><div class="t" style="left:911.5px;top:446.49px;font-size:7.13px;transform:scaleX(0.8696);transform-origin:0 50%;color:#333;font-weight:normal;">Green Top</div><div class="a" style="left:1000.5px;top:442.5px;width:35px;height:12.5px;border:1px solid #c8c8c8;background:#e6e6e6"></div><div class="a" style="left:1018px;top:442.5px;width:17.5px;height:12.5px;background:#2f7cbe;"></div><div class="t" style="left:1021.4px;top:445.65px;font-size:7.59px;transform:scaleX(0.8696);transform-origin:0 50%;color:#fff;font-weight:normal;">ON</div><div class="a" style="left:1048.0px;top:447.8px;width:1.4px;height:1.4px;background:#444;border-radius:50%"></div><div class="a" style="left:1050.6px;top:447.8px;width:1.4px;height:1.4px;background:#444;border-radius:50%"></div><div class="a" style="left:1053.2px;top:447.8px;width:1.4px;height:1.4px;background:#444;border-radius:50%"></div><div class="lbl" style="left:896.8px;top:463.98px">VOLTS PER DIVISION</div><div class="lbl" style="left:1009px;top:463.98px">Y POSITION</div><div class="dd" style="left:896.5px;top:471.5px;width:64.0px;height:13.100000000000023px"></div><div class="t" style="left:902.0px;top:474.88px;font-size:7.24px;transform:scaleX(0.8696);transform-origin:0 50%;color:#222;font-weight:normal;">10 V</div><div class="tri" style="left:951.0px;top:476.4px;border-left-width:2.6px;border-right-width:2.6px;border-top-width:3.6px"></div><div class="btn" style="left:963.5px;top:471.5px;width:17.0px;height:13.100000000000023px"></div><svg class="a" style="left:963.5px;top:471.5px" width="17.0" height="13.100000000000023" viewBox="0 0 17.0 13.100000000000023"><circle cx="3.6" cy="6.6" r=".9" fill="#333"/><path d="M5.5 9.8H6.8C8.6 9.8 8.4 3.4 10.2 3.4C11.6 3.4 11.8 5.6 12.4 7.1" fill="none" stroke="#333" stroke-width=".8"/></svg><div class="btn" style="left:983px;top:471.5px;width:18px;height:13.100000000000023px"></div><svg class="a" style="left:983px;top:471.5px" width="18" height="13.100000000000023" viewBox="0 0 18 13.100000000000023"><path d="M3 7.4C5 4.4 7 4.4 8.5 6.6S10.5 8.1 11 7.6" fill="none" stroke="#333" stroke-width=".8"/><path d="M12.3 5.8h3l-1.5 2z" fill="#333"/></svg><div class="tb" style="left:1009px;top:471.5px;width:48px;height:13.100000000000023px"></div><div class="t" style="left:1015px;top:475.46px;font-size:6.90px;transform:scaleX(0.8696);transform-origin:0 50%;color:#222;font-weight:normal;">2.047 div</div><div class="lbl" style="left:896.8px;top:493.48px">COUPLING</div><div class="lbl" style="left:932.5px;top:493.48px">PROBE</div><div class="lbl" style="left:958.8px;top:493.48px">BANDWIDTH</div><div class="lbl" style="left:998.8px;top:493.48px">INPUT</div><div class="lbl" style="left:1023.3px;top:493.48px">RANGE</div><div class="val" style="left:896.8px;top:504.41px">DC</div><div class="val" style="left:932.5px;top:504.41px">1 X</div><div class="val" style="left:958.8px;top:504.41px">100 MHz</div><div class="val" style="left:998.8px;top:504.41px">1 M&#937;</div><div class="val" style="left:1023.3px;top:504.41px">80 V</div><div class="a" style="left:883px;top:518px;width:3px;height:73px;background:#e21ee0;"></div><div class="a" style="left:896.8px;top:524.3px;width:11px;height:11px;background:#e21ee0;"></div><div class="t" style="left:900.3px;top:527.29px;font-size:7.13px;transform:scaleX(0.8696);transform-origin:0 50%;color:#fff;font-weight:normal;">2</div><div class="t" style="left:911.5px;top:527.49px;font-size:7.13px;transform:scaleX(0.8696);transform-origin:0 50%;color:#333;font-weight:normal;">Blue Top</div><div class="a" style="left:1000.5px;top:523.5px;width:35px;height:12.5px;border:1px solid #c8c8c8;background:#e6e6e6"></div><div class="a" style="left:1018px;top:523.5px;width:17.5px;height:12.5px;background:#2f7cbe;"></div><div class="t" style="left:1021.4px;top:526.65px;font-size:7.59px;transform:scaleX(0.8696);transform-origin:0 50%;color:#fff;font-weight:normal;">ON</div><div class="a" style="left:1048.0px;top:528.8px;width:1.4px;height:1.4px;background:#444;border-radius:50%"></div><div class="a" style="left:1050.6px;top:528.8px;width:1.4px;height:1.4px;background:#444;border-radius:50%"></div><div class="a" style="left:1053.2px;top:528.8px;width:1.4px;height:1.4px;background:#444;border-radius:50%"></div><div class="lbl" style="left:896.8px;top:544.98px">VOLTS PER DIVISION</div><div class="lbl" style="left:1009px;top:544.98px">Y POSITION</div><div class="dd" style="left:896.5px;top:552.5px;width:64.0px;height:13.100000000000023px"></div><div class="t" style="left:902.0px;top:555.88px;font-size:7.24px;transform:scaleX(0.8696);transform-origin:0 50%;color:#222;font-weight:normal;">20 V</div><div class="tri" style="left:951.0px;top:557.4px;border-left-width:2.6px;border-right-width:2.6px;border-top-width:3.6px"></div><div class="btn" style="left:963.5px;top:552.5px;width:17.0px;height:13.100000000000023px"></div><svg class="a" style="left:963.5px;top:552.5px" width="17.0" height="13.100000000000023" viewBox="0 0 17.0 13.100000000000023"><circle cx="3.6" cy="6.6" r=".9" fill="#333"/><path d="M5.5 9.8H6.8C8.6 9.8 8.4 3.4 10.2 3.4C11.6 3.4 11.8 5.6 12.4 7.1" fill="none" stroke="#333" stroke-width=".8"/></svg><div class="btn" style="left:983px;top:552.5px;width:18px;height:13.100000000000023px"></div><svg class="a" style="left:983px;top:552.5px" width="18" height="13.100000000000023" viewBox="0 0 18 13.100000000000023"><path d="M3 7.4C5 4.4 7 4.4 8.5 6.6S10.5 8.1 11 7.6" fill="none" stroke="#333" stroke-width=".8"/><path d="M12.3 5.8h3l-1.5 2z" fill="#333"/></svg><div class="tb" style="left:1009px;top:552.5px;width:48px;height:13.100000000000023px"></div><div class="t" style="left:1015px;top:556.46px;font-size:6.90px;transform:scaleX(0.8696);transform-origin:0 50%;color:#222;font-weight:normal;">0.933 div</div><div class="lbl" style="left:896.8px;top:574.48px">COUPLING</div><div class="lbl" style="left:932.5px;top:574.48px">PROBE</div><div class="lbl" style="left:958.8px;top:574.48px">BANDWIDTH</div><div class="lbl" style="left:998.8px;top:574.48px">INPUT</div><div class="lbl" style="left:1023.3px;top:574.48px">RANGE</div><div class="val" style="left:896.8px;top:585.41px">DC</div><div class="val" style="left:932.5px;top:585.41px">1 X</div><div class="val" style="left:958.8px;top:585.41px">100 MHz</div><div class="val" style="left:998.8px;top:585.41px">1 M&#937;</div><div class="val" style="left:1023.3px;top:585.41px">80 V</div></div></body></html>
